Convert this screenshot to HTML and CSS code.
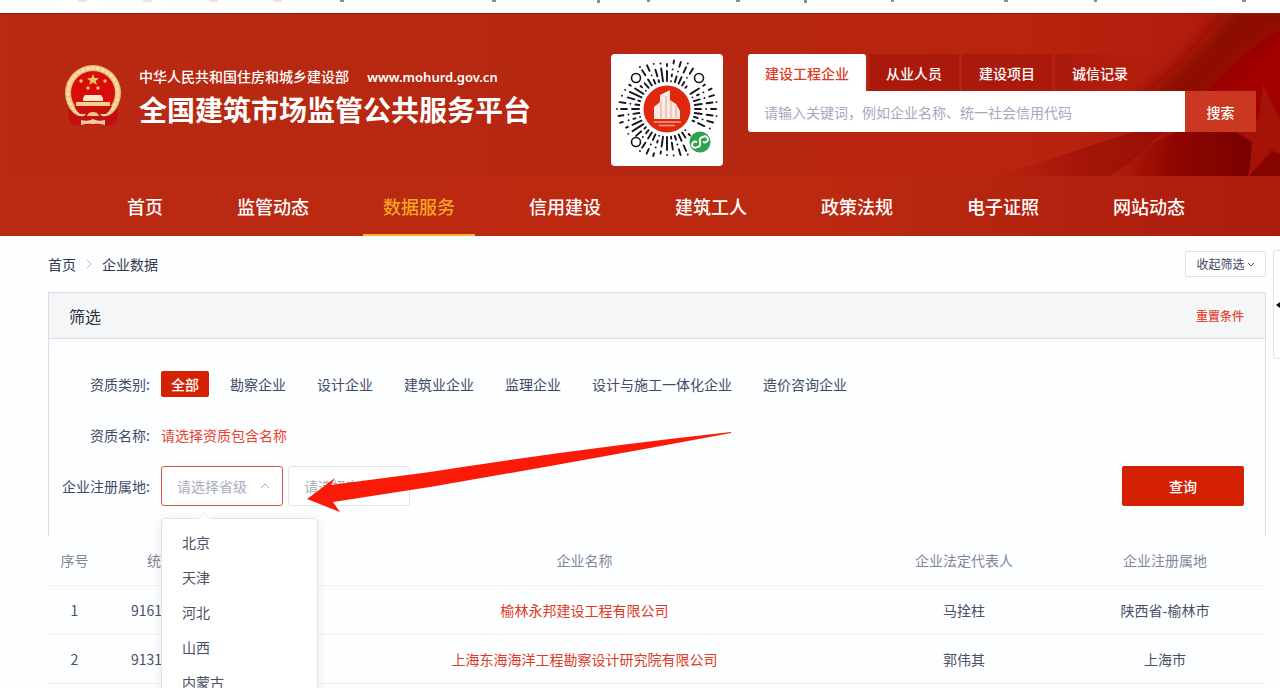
FILE: index.html
```html
<!DOCTYPE html>
<html lang="zh-CN">
<head>
    <meta charset="UTF-8">
    <meta name="viewport" content="width=device-width, initial-scale=1.0">
    <title>全国建筑市场监管公共服务平台</title>
    <link rel="stylesheet" href="styles.css">
</head>
<body>
    <div class="top-strip">
        <svg width="1280" height="3" viewBox="0 0 1280 3" aria-hidden="true">
            <g fill="#f3e3d3">
                <rect x="78" width="9" height="2"/><rect x="143" width="9" height="2"/>
                <rect x="209" width="9" height="2"/><rect x="273" width="9" height="2"/>
            </g>
            <g fill="#8d8d8d">
                <rect x="340" width="4" height="2"/><rect x="492" width="4" height="2"/>
                <rect x="597" width="3" height="3"/><rect x="647" width="3" height="2"/>
                <rect x="736" width="4" height="2"/><rect x="804" width="3" height="3"/>
                <rect x="891" width="3" height="2"/><rect x="1004" width="4" height="2"/>
                <rect x="1094" width="3" height="2"/><rect x="1242" width="4" height="2"/>
            </g>
        </svg>
    </div>

    <header class="header">
        <svg class="header-bg" viewBox="0 0 480 162" preserveAspectRatio="xMaxYMin slice" aria-hidden="true">
            <defs>
                <filter id="soft" x="-20%" y="-20%" width="140%" height="140%">
                    <feGaussianBlur stdDeviation="9"/>
                </filter>
                <linearGradient id="fold" x1="0" y1="0" x2="1" y2="0">
                    <stop offset="0" stop-color="#9e1206" stop-opacity="0"/>
                    <stop offset="0.5" stop-color="#8f0500"/>
                    <stop offset="1" stop-color="#760200"/>
                </linearGradient>
            </defs>
            <g filter="url(#soft)">
                <path d="M300 110 C370 70 400 30 440 -20 H500 V110 Z" fill="#8c0a03"/>
                <path d="M380 110 C420 60 450 30 500 5 V130 H380 Z" fill="#a30200"/>
                <path d="M340 170 C350 140 370 110 400 105 H500 V170 Z" fill="#a80b03"/>
            </g>
            <path d="M190 162 C280 140 320 116 370 112 C350 130 335 146 310 162 Z" fill="url(#fold)" opacity="0.45"/>
            <path d="M300 162 C340 140 360 118 400 112 C425 110 440 116 456 126 L448 162 Z" fill="url(#fold)"/>
            <path d="M463 70 L480 106 V138 L470 134 L449 162 L452 128 L426 112 L458 110 Z" fill="#a31407"/>
            <path d="M449 162 L472 137 L480 140 V162 Z" fill="#850400"/>
        </svg>

        <div class="header-main">
            <div class="brand">
                <svg class="emblem" width="60" height="64" viewBox="0 0 60 64" role="img" aria-label="国徽">
                    <circle cx="29" cy="29" r="28" fill="#e9bd7d"/>
                    <circle cx="29" cy="29" r="25" fill="none" stroke="#f7dfae" stroke-width="3" stroke-dasharray="4 1"/>
                    <circle cx="29" cy="29" r="22" fill="#d90b0b"/>
                    <path d="M29 10 L30.600 14 L35 14.200 L31.600 17 L33 21 L29 18.600 L25 21 L26.400 17 L23 14.200 L27.400 14 Z" fill="#f5c567"/>
                    <g fill="#f5c567">
                        <circle cx="17" cy="17" r="1.700"/><circle cx="41" cy="17" r="1.700"/>
                        <circle cx="24" cy="24" r="1.700"/><circle cx="34" cy="24" r="1.700"/>
                    </g>
                    <path d="M21 31 H37 L39 34 V37 H19 V34 Z" fill="#fbe9c8"/>
                    <path d="M12 38 H46 V42 H12 Z" fill="#f4cf92"/>
                    <path d="M10 42 H48 Q46 47 42 50 H16 Q12 47 10 42 Z" fill="#c90f0c"/>
                    <path d="M4 44 Q12 54 20 52 Q24 48 29 48 Q34 48 38 52 Q46 54 54 44 L53 57 Q47 63 41 61 H17 Q9 63 5 57 Z" fill="#c30f14"/>
                    <path d="M23 52 Q24 48 29 48 Q34 48 35 52 Z" fill="#eec487"/>
                    <path d="M17 56 Q24 58 29 55 Q34 58 41 56 V61 Q34 59 29 60 Q24 59 17 61 Z" fill="#f3cf96"/>
                </svg>
                <div class="brand-text">
                    <p class="ministry">中华人民共和国住房和城乡建设部 <a href="#">www.mohurd.gov.cn</a></p>
                    <h1>全国建筑市场监管公共服务平台</h1>
                </div>
            </div>

            <div class="qr-card">
                <svg width="112" height="112" viewBox="0 0 112 112" role="img" aria-label="小程序码">
                    <g id="qr-rays" stroke="#15151f" stroke-width="1.900" stroke-linecap="round"></g>
                    <g fill="#fff" stroke="#15151f" stroke-width="1.600">
                        <circle cx="25" cy="24" r="4.500"/>
                        <circle cx="88" cy="24" r="4.500"/>
                        <circle cx="25" cy="88" r="4.500"/>
                    </g>
                    <circle cx="56" cy="55" r="25" fill="#fff"/>
                    <circle cx="56" cy="55" r="23.500" fill="#e0280f"/>
                    <path d="M43 65 V53 L49 48 V41 L59 36 V46 L65 50 L69 57 V65 Z" fill="#fbe9e4"/>
                    <path d="M50 48 V64 M55 42 V64 M60 47 V64 M65 52 V64" stroke="#e3a294" stroke-width="1"/>
                    <path d="M43 68 H70 M48 71.500 H64" stroke="#f3a08c" stroke-width="1.500"/>
                    <circle cx="89" cy="88" r="10.500" fill="#2da44c"/>
                    <path d="M86 93 a3 3 0 1 1 -0.500 -5 M92 83 a3 3 0 1 1 0.500 5 M87 93 Q90 92 89 88 Q88 84 91.500 83" fill="none" stroke="#fff" stroke-width="1.900" stroke-linecap="round"/>
                </svg>
            </div>

            <form class="search">
                <div class="search-tabs">
                    <button type="button" class="tab active">建设工程企业</button>
                    <button type="button" class="tab">从业人员</button>
                    <button type="button" class="tab">建设项目</button>
                    <button type="button" class="tab">诚信记录</button>
                </div>
                <div class="search-box">
                    <input type="text" aria-label="关键词" placeholder="请输入关键词，例如企业名称、统一社会信用代码">
                    <button type="button">搜索</button>
                </div>
            </form>
        </div>

        <nav class="nav">
            <a href="#">首页</a>
            <a href="#">监管动态</a>
            <a href="#" class="active">数据服务</a>
            <a href="#">信用建设</a>
            <a href="#">建筑工人</a>
            <a href="#">政策法规</a>
            <a href="#">电子证照</a>
            <a href="#">网站动态</a>
        </nav>
    </header>

    <main class="content">
        <div class="crumb-bar">
            <div class="crumbs">
                <a href="#">首页</a>
                <svg width="6" height="10" viewBox="0 0 6 10" fill="none" stroke="#b4b8c4" aria-hidden="true"><path d="M1 1 L5 5 L1 9"/></svg>
                <span>企业数据</span>
            </div>
            <button type="button" class="toggle-filter">收起筛选<svg width="8" height="5" viewBox="0 0 8 5" fill="none" stroke="#50586e" aria-hidden="true"><path d="M1 1 L4 4 L7 1"/></svg></button>
        </div>

        <section class="panel">
            <div class="panel-head">
                <h2>筛选</h2>
                <button type="button" class="reset">重置条件</button>
            </div>
            <div class="filters">
                <div class="filter-row">
                    <span class="filter-label">资质类别:</span>
                    <div class="options">
                        <a href="#" class="active">全部</a>
                        <a href="#">勘察企业</a>
                        <a href="#">设计企业</a>
                        <a href="#">建筑业企业</a>
                        <a href="#">监理企业</a>
                        <a href="#">设计与施工一体化企业</a>
                        <a href="#">造价咨询企业</a>
                    </div>
                </div>
                <div class="filter-row">
                    <span class="filter-label">资质名称:</span>
                    <a href="#" class="pick">请选择资质包含名称</a>
                </div>
                <div class="filter-row region-row">
                    <label class="filter-label" for="province">企业注册属地:</label>
                    <div class="select-wrap">
                        <select id="province" class="open">
                            <option>请选择省级</option>
                        </select>
                        <svg width="10" height="6" viewBox="0 0 10 6" fill="none" stroke="#a9adba" aria-hidden="true"><path d="M1 5 L5 1 L9 5"/></svg>
                        <ul class="dropdown">
                            <li>北京</li>
                            <li>天津</li>
                            <li>河北</li>
                            <li>山西</li>
                            <li>内蒙古</li>
                        </ul>
                    </div>
                    <div class="select-wrap">
                        <select aria-label="市级">
                            <option>请选择市级</option>
                        </select>
                        <svg class="pointer" width="426" height="82" viewBox="0 0 426 82" aria-hidden="true">
                            <path d="M1 68 L29 47 L25 54 L124 41 Q270 18 425 1 V2 Q270 31 124 56 L27 71 L34 81 Z" fill="#fb1a08"/>
                        </svg>
                    </div>
                    <button type="button" class="query">查询</button>
                </div>
            </div>
        </section>

        <table class="results">
            <thead>
                <tr>
                    <th class="col-no">序号</th>
                    <th class="col-code">统一社会信用代码</th>
                    <th>企业名称</th>
                    <th class="col-person">企业法定代表人</th>
                    <th class="col-region">企业注册属地</th>
                </tr>
            </thead>
            <tbody>
                <tr>
                    <td>1</td>
                    <td class="code">9161</td>
                    <td><a href="#">榆林永邦建设工程有限公司</a></td>
                    <td>马拴柱</td>
                    <td>陕西省-榆林市</td>
                </tr>
                <tr>
                    <td>2</td>
                    <td class="code">9131</td>
                    <td><a href="#">上海东海海洋工程勘察设计研究院有限公司</a></td>
                    <td>郭伟其</td>
                    <td>上海市</td>
                </tr>
            </tbody>
        </table>
    </main>

    <aside class="side-tool">
        <svg width="4" height="6" viewBox="0 0 4 6" aria-hidden="true"><path d="M4 0 L0 3 L4 6 Z" fill="#111"/></svg>
    </aside>

    <script>
        // each ray is a list of [from, to] radii, repeated round the centre
        const rays = [
            [[28, 34], [39, 39], [44, 49]],
            [[28, 38], [43, 45]],
            [[28, 30], [34, 41], [47, 47]],
            [[28, 35], [40, 46], [50, 50]],
            [[28, 28], [33, 35], [40, 40], [46, 49]],
            [[28, 41], [46, 46]],
            [[28, 32], [37, 37], [42, 48]]
        ];
        const count = 44;
        let lines = '';

        for (let i = 0; i < count; i++) {
            const angle = i * 2 * Math.PI / count;
            const x = Math.cos(angle);
            const y = Math.sin(angle);
            for (const [from, to] of rays[(i * 3) % rays.length]) {
                // keep the three finder rings and the badge clear
                const far = [[25, 24], [88, 24], [25, 88], [89, 88]].every(([cx, cy], n) =>
                    [from, to].every(r => Math.hypot(56 + x * r - cx, 55 + y * r - cy) > (n === 3 ? 12 : 6)));
                if (far) {
                    lines += `<line x1="${56 + x * from}" y1="${55 + y * from}" x2="${56 + x * to + 0.01}" y2="${55 + y * to}"/>`;
                }
            }
        }
        document.getElementById('qr-rays').innerHTML = lines;
    </script>
</body>
</html>
```
FILE: styles.css
```css
* {
    box-sizing: border-box;
}
body {
    margin: 0;
    height: 100vh;
    overflow: hidden;
    position: relative;
    font-family: "Noto Sans CJK SC", sans-serif;
    font-size: 14px;
    line-height: 20px;
    color: #4a5068;
    background-color: #fdfeff;
}
a {
    color: inherit;
    text-decoration: none;
}
button, input, select {
    font: inherit;
    border: none;
    margin: 0;
}
button {
    cursor: pointer;
}
h1, h2, p, ul {
    margin: 0;
    padding: 0;
}
.top-strip {
    height: 13px;
    overflow: hidden;
    background-color: #fff;
}
.top-strip svg {
    display: block;
}

/* header */
.header {
    position: relative;
    color: #fff;
    background: linear-gradient(90deg, #ba2a12, #b52711 50%, #b9230f 80%, #ad1a0b);
    border-top: 1px solid #93200f;
}
.header-bg {
    position: absolute;
    top: 0;
    right: 0;
    width: 480px;
    height: 162px;
}
.header-main {
    position: relative;
    display: grid;
    grid-template-columns: 1fr auto 508px;
    gap: 25px;
    height: 162px;
    padding: 40px 24px 0 64px;
    align-items: start;
}
.brand {
    display: flex;
    gap: 15px;
    padding-top: 10px;
    white-space: nowrap;
}
.emblem {
    flex: none;
}
.ministry {
    padding-top: 2px;
    font-weight: 500;
    line-height: 20px;
}
.ministry a {
    margin-left: 15px;
    font-family: "Noto Sans", sans-serif;
    font-size: 13px;
    font-weight: 600;
}
.brand h1 {
    font-size: 28px;
    line-height: 40px;
    padding-top: 2px;
    font-weight: 700;
}
.qr-card {
    height: 112px;
    background-color: #fff;
    border-radius: 4px;
}
.qr-card svg {
    display: block;
}
.search-tabs {
    display: flex;
    gap: 3px;
}
.tab {
    height: 37px;
    padding: 0 17px;
    color: #fff;
    font-weight: 500;
    background-color: rgba(160, 20, 10, 0.6);
}
.tab.active {
    color: #dc3c26;
    background-color: #fff;
    border-radius: 3px 3px 0 0;
}
.tab:last-child {
    background: linear-gradient(90deg, rgba(160, 20, 10, 0.6), rgba(160, 20, 10, 0));
}
.search-box {
    display: flex;
    height: 41px;
}
.search-box input {
    flex: 1;
    min-width: 0;
    padding: 0 16px;
    background-color: #fff;
    border-radius: 0 0 0 3px;
}
.search-box input::placeholder {
    color: #a3aabb;
}
.search-box button {
    width: 71px;
    color: #fff;
    font-weight: 500;
    background-color: #cb3822;
}
.nav {
    position: relative;
    display: flex;
    gap: 34px;
    height: 60px;
    padding-left: 107px;
    background: linear-gradient(90deg, #ba2911, #bb2911 65%, #ab1c0c);
}
.nav a {
    height: 60px;
    padding: 0 20px;
    font-size: 18px;
    line-height: 60px;
    font-weight: 500;
    white-space: nowrap;
}
.nav a.active {
    color: #f5a623;
    border-bottom: 2px solid #f8b52c;
}

/* breadcrumb */
.content {
    padding: 0 14px 0 48px;
}
.crumb-bar {
    display: flex;
    justify-content: space-between;
    align-items: center;
    height: 56px;
}
.crumbs {
    display: flex;
    align-items: center;
    gap: 10px;
    color: #33384e;
}
.toggle-filter {
    display: flex;
    align-items: center;
    justify-content: center;
    gap: 2px;
    width: 81px;
    height: 26px;
    padding: 0;
    font-size: 12px;
    color: #3d4560;
    background-color: #fff;
    border: 1px solid #dfe1e8;
    border-radius: 2px;
}

/* filter panel */
.panel {
    border: 1px solid #dcdee4;
    border-bottom: none;
}
.panel-head {
    display: flex;
    justify-content: space-between;
    align-items: center;
    height: 46px;
    padding: 0 21px 0 20px;
    background-color: #f5f6f8;
    border-bottom: 1px solid #dcdee4;
}
.panel-head h2 {
    font-size: 16px;
    font-weight: 400;
    color: #2c3044;
}
.reset {
    padding: 0;
    font-size: 12px;
    font-weight: 500;
    color: #e04a34;
    background: none;
}
.filters {
    padding: 32px 21px 30px 0;
}
.filter-row {
    display: flex;
    align-items: center;
    height: 26px;
    margin-bottom: 25px;
    color: #414a66;
}
.filter-label {
    width: 101px;
    margin-right: 11px;
    text-align: right;
    white-space: nowrap;
}
.options {
    display: flex;
    gap: 11px;
}
.options a {
    padding: 0 10px;
    line-height: 26px;
    white-space: nowrap;
}
.options a.active {
    color: #fff;
    font-weight: 500;
    background-color: #d42104;
    border-radius: 2px;
}
.pick {
    color: #e5432c;
}
.region-row {
    height: 40px;
    margin: -7px 0 0;
}
.select-wrap {
    position: relative;
    width: 122px;
    margin-right: 5px;
}
.select-wrap select {
    display: block;
    width: 100%;
    height: 40px;
    padding: 0 15px;
    color: #a9adba;
    background-color: #fff;
    border: 1px solid #e3e5ec;
    border-radius: 3px;
    appearance: none;
}
.select-wrap select.open {
    border-color: #d4553f;
}
.select-wrap > svg {
    position: absolute;
    top: 17px;
    right: 13px;
}
.select-wrap .pointer {
    top: -35px;
    left: 18px;
    right: auto;
    z-index: 3;
}
.query {
    width: 122px;
    height: 40px;
    margin-left: auto;
    color: #fff;
    font-weight: 500;
    background-color: #d42104;
    border-radius: 2px;
}
.dropdown {
    position: absolute;
    top: 52px;
    left: 0;
    z-index: 2;
    width: 157px;
    padding: 6px 0;
    list-style: none;
    color: #4b4f63;
    background-color: #fff;
    border: 1px solid #e1e3ea;
    border-radius: 4px;
    box-shadow: 0 2px 10px rgba(0, 0, 0, 0.1);
}
.dropdown::before {
    content: "";
    position: absolute;
    top: -5px;
    left: 38px;
    width: 8px;
    height: 8px;
    background-color: #fff;
    border: 1px solid #eceef3;
    border-right: none;
    border-bottom: none;
    transform: rotate(45deg);
}
.dropdown li {
    padding-left: 20px;
    line-height: 35px;
}

/* result table */
.results {
    width: 100%;
    table-layout: fixed;
    border-collapse: collapse;
    text-align: center;
}
.results th, .results td {
    height: 49px;
    padding: 0;
    border-bottom: 1px solid #f1f2f6;
}
.results th {
    font-weight: 400;
    color: #83879a;
}
.results a {
    color: #dd3a24;
}
.results .code {
    padding-left: 30px;
    text-align: left;
}
.col-no {
    width: 53px;
}
.col-code {
    width: 204px;
}
.col-person {
    width: 200px;
}
.col-region {
    width: 202px;
}

.side-tool {
    position: absolute;
    top: 250px;
    right: 0;
    display: flex;
    align-items: center;
    justify-content: flex-end;
    width: 7px;
    height: 109px;
    background-color: #fff;
    border: 1px solid #e1e3ea;
    border-right: none;
    border-radius: 4px 0 0 4px;
}
```
